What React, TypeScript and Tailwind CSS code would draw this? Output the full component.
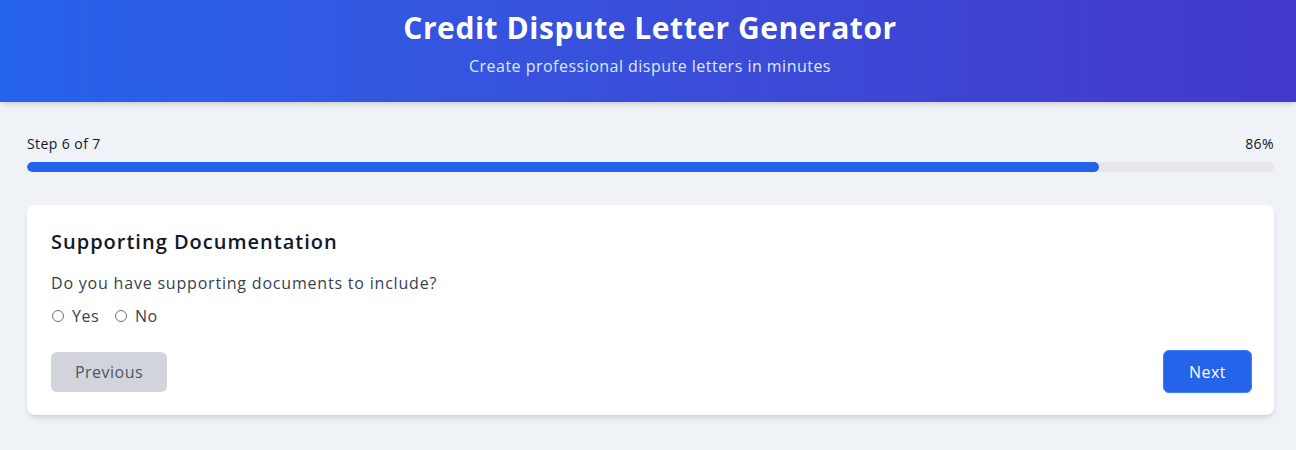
import React from "react";

export default function App() {
  return (
    <div className="min-h-[450px] bg-[#eff2f7] font-['Open_Sans',sans-serif]" >
      <header className="bg-gradient-to-r from-[#2563eb] to-[#4338ca] shadow-md pt-[10px] pb-[24px] text-center">
        <h1 className="text-[30px] leading-[36px] font-bold text-white tracking-[0.018em] pl-[4px]">
          Credit Dispute Letter Generator
        </h1>
        <p className="mt-[8px] text-[16px] leading-[24px] text-[#dbeafe] tracking-[0.03em] pl-[4px]">
          Create professional dispute letters in minutes
        </p>
      </header>

      <main className="pl-[27px] pr-[22px] pt-[32px]">
        <div className="flex justify-between items-center mb-[8px] text-[14px] leading-[20px] font-medium text-[#111827] tracking-[0.03em]">
          <span>Step 6 of 7</span>
          <span>86%</span>
        </div>
        <div className="h-[10px] w-full rounded-full bg-[#e5e7eb] overflow-hidden">
          <div className="h-full rounded-full bg-[#2563eb]" style={{ width: "86%" }} />
        </div>

        <section className="mt-[33px] bg-white rounded-lg shadow-md pl-[24px] pr-[22px] pt-[23px] pb-[22px]">
          <h2 className="text-[20px] leading-[28px] font-semibold text-[#111827] tracking-[0.05em]">
            Supporting Documentation
          </h2>
          <p className="mt-[15px] text-[16px] leading-[24px] text-[#374151] tracking-[0.05em]">
            Do you have supporting documents to include?
          </p>
          <div className="mt-[9px] flex items-center text-[16px] leading-[24px] text-[#374151] tracking-[0.03em]">
            <label className="flex items-center">
              <span className="ml-[1px] w-[12px] h-[12px] rounded-full border border-[#6b7280] bg-white" />
              <span className="ml-[8px]">Yes</span>
            </label>
            <label className="flex items-center ml-[16px]">
              <span className="w-[12px] h-[12px] rounded-full border border-[#6b7280] bg-white" />
              <span className="ml-[8px]">No</span>
            </label>
          </div>
          <div className="mt-[22px] flex items-center justify-between">
            <button className="w-[116px] h-[40px] rounded-md bg-[#d1d5db] text-[#4b5563] text-[16px] tracking-[0.03em]">
              Previous
            </button>
            <button className="w-[89px] h-[43px] rounded-md bg-[#2563eb] border border-[#3b82f6] text-white text-[16px] tracking-[0.03em]">
              Next
            </button>
          </div>
        </section>
      </main>
    </div>
  );
}
